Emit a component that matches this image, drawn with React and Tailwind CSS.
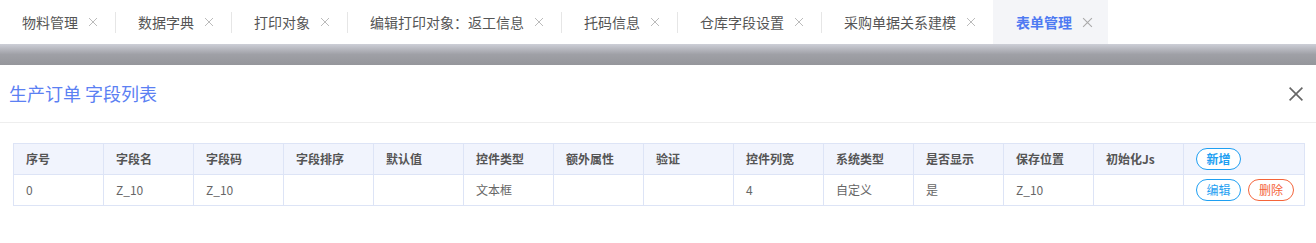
import React from "react";

const tabs = [
  "物料管理",
  "数据字典",
  "打印对象",
  "编辑打印对象：返工信息",
  "托码信息",
  "仓库字段设置",
  "采购单据关系建模",
  "表单管理",
];

const columns = [
  "序号",
  "字段名",
  "字段码",
  "字段排序",
  "默认值",
  "控件类型",
  "额外属性",
  "验证",
  "控件列宽",
  "系统类型",
  "是否显示",
  "保存位置",
  "初始化Js",
];

const rows = [["0", "Z_10", "Z_10", "", "", "文本框", "", "", "4", "自定义", "是", "Z_10", ""]];

const CloseIcon = ({ className }) => (
  <svg viewBox="0 0 10 10" className={className} fill="none" stroke="currentColor" strokeWidth="1">
    <path d="M1 1L9 9M9 1L1 9" />
  </svg>
);

const App = () => {
  const activeTab = tabs.length - 1;

  return (
    <div
      className="h-[243px] w-[1316px] overflow-hidden bg-white"
      style={{ fontFamily: '"Noto Sans CJK SC", "Noto Sans", sans-serif' }}
    >
      <nav className="flex h-[44px] items-center bg-white">
        {tabs.map((tab, i) => {
          const active = i === activeTab;
          return (
            <React.Fragment key={tab}>
              <div
                className={
                  active
                    ? "flex h-full items-center bg-[#f4f5f8] pl-[23px] pr-[15px] text-[14px] font-bold text-[#4e7af2]"
                    : "flex h-full items-center pl-[22px] pr-[17px] text-[14px] text-[#555]"
                }
              >
                <span>{tab}</span>
                <CloseIcon className={active ? "ml-[10px] h-[11px] w-[11px] text-[#aaa]" : "ml-[10px] h-[10px] w-[10px] text-[#bbb]"} />
              </div>
              {i < tabs.length - 2 && <span className="h-[21px] w-px bg-[#e6e6e6]" />}
            </React.Fragment>
          );
        })}
      </nav>

      <div className="h-[21px] bg-gradient-to-b from-[#cdcfd7] via-[#9fa0a6] to-[#95969b]" />

      <section className="bg-white">
        <header className="flex h-[58px] items-center justify-between border-b border-[#eeeeee] pl-[9px] pr-[12px]">
          <h2 className="text-[18px] text-[#5b80f3]">生产订单 字段列表</h2>
          <CloseIcon className="h-[16px] w-[16px] text-[#666]" />
        </header>

        <div className="px-[11px] pl-[13px] pt-[20px]">
          <table className="w-[1292px] table-fixed border-collapse text-[12px]">
            <colgroup>
              {columns.map((c) => (
                <col key={c} className="w-[90px]" />
              ))}
              <col />
            </colgroup>
            <thead>
              <tr className="h-[31px] bg-[#f1f4fd]">
                {columns.map((c) => (
                  <th key={c} className="border border-[#dde4f6] pl-[12px] text-left font-semibold text-[#555]">
                    {c}
                  </th>
                ))}
                <th className="border border-[#dde4f6] pl-[12px] text-left">
                  <button className="h-[22px] w-[45px] rounded-full border border-[#1e9ff2] bg-white text-[12px] font-bold text-[#1e9ff2]">
                    新增
                  </button>
                </th>
              </tr>
            </thead>
            <tbody>
              {rows.map((row, r) => (
                <tr key={r} className="h-[31px]">
                  {row.map((v, i) => (
                    <td key={i} className="border border-[#dde4f6] pl-[12px] text-[#666]">
                      {v}
                    </td>
                  ))}
                  <td className="border border-[#dde4f6] pl-[12px]">
                    <div className="flex gap-[7px]">
                      <button className="h-[22px] w-[45px] rounded-full border border-[#1e9ff2] text-[12px] text-[#1e9ff2]">
                        编辑
                      </button>
                      <button className="h-[22px] w-[46px] rounded-full border border-[#f4643a] text-[12px] text-[#f4643a]">
                        删除
                      </button>
                    </div>
                  </td>
                </tr>
              ))}
            </tbody>
          </table>
        </div>
      </section>
    </div>
  );
};

export default App;
